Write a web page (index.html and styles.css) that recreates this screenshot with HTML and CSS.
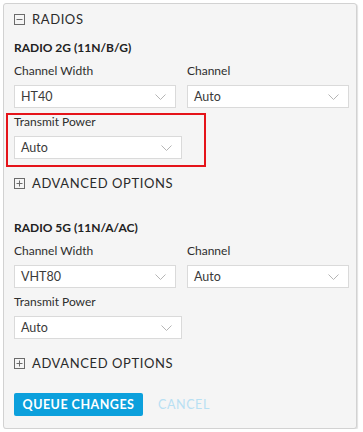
FILE: index.html
```html
<!DOCTYPE html>
<html lang="en">
<head>
<meta charset="utf-8">
<title>Radios</title>
<link rel="stylesheet" href="styles.css">
</head>
<body>
<div class="panel">
  <div class="toggle-row">
    <svg class="toggle-icon" width="11" height="11" viewBox="0 0 11 11"><rect x="0.5" y="0.5" width="10" height="10" fill="none" stroke="#6b6b6b"/><line x1="2.5" y1="5.5" x2="8.5" y2="5.5" stroke="#6b6b6b"/></svg>
    <span class="toggle-text">RADIOS</span>
  </div>

  <div class="radio-title">RADIO 2G (11N/B/G)</div>
  <div class="field-row">
    <div class="field">
      <div class="field-label">Channel Width</div>
      <div class="select"><span>HT40</span><svg class="chev" width="11" height="6" viewBox="0 0 11 6"><polyline points="0.5,0.5 5.5,5.5 10.5,0.5" fill="none" stroke="#b5b5b5"/></svg></div>
    </div>
    <div class="field">
      <div class="field-label">Channel</div>
      <div class="select"><span>Auto</span><svg class="chev" width="11" height="6" viewBox="0 0 11 6"><polyline points="0.5,0.5 5.5,5.5 10.5,0.5" fill="none" stroke="#b5b5b5"/></svg></div>
    </div>
  </div>
  <div class="field field-power highlighted">
    <div class="field-label">Transmit Power</div>
    <div class="select"><span>Auto</span><svg class="chev" width="11" height="6" viewBox="0 0 11 6"><polyline points="0.5,0.5 5.5,5.5 10.5,0.5" fill="none" stroke="#b5b5b5"/></svg></div>
  </div>
  <div class="toggle-row advanced">
    <svg class="toggle-icon" width="11" height="11" viewBox="0 0 11 11"><rect x="0.5" y="0.5" width="10" height="10" fill="none" stroke="#6b6b6b"/><line x1="2.5" y1="5.5" x2="8.5" y2="5.5" stroke="#6b6b6b"/><line x1="5.5" y1="2.5" x2="5.5" y2="8.5" stroke="#6b6b6b"/></svg>
    <span class="toggle-text">ADVANCED OPTIONS</span>
  </div>

  <div class="radio-title second">RADIO 5G (11N/A/AC)</div>
  <div class="field-row">
    <div class="field">
      <div class="field-label">Channel Width</div>
      <div class="select"><span>VHT80</span><svg class="chev" width="11" height="6" viewBox="0 0 11 6"><polyline points="0.5,0.5 5.5,5.5 10.5,0.5" fill="none" stroke="#b5b5b5"/></svg></div>
    </div>
    <div class="field">
      <div class="field-label">Channel</div>
      <div class="select"><span>Auto</span><svg class="chev" width="11" height="6" viewBox="0 0 11 6"><polyline points="0.5,0.5 5.5,5.5 10.5,0.5" fill="none" stroke="#b5b5b5"/></svg></div>
    </div>
  </div>
  <div class="field field-power">
    <div class="field-label">Transmit Power</div>
    <div class="select"><span>Auto</span><svg class="chev" width="11" height="6" viewBox="0 0 11 6"><polyline points="0.5,0.5 5.5,5.5 10.5,0.5" fill="none" stroke="#b5b5b5"/></svg></div>
  </div>
  <div class="toggle-row advanced">
    <svg class="toggle-icon" width="11" height="11" viewBox="0 0 11 11"><rect x="0.5" y="0.5" width="10" height="10" fill="none" stroke="#6b6b6b"/><line x1="2.5" y1="5.5" x2="8.5" y2="5.5" stroke="#6b6b6b"/><line x1="5.5" y1="2.5" x2="5.5" y2="8.5" stroke="#6b6b6b"/></svg>
    <span class="toggle-text">ADVANCED OPTIONS</span>
  </div>

  <div class="actions">
    <button class="btn-primary">QUEUE CHANGES</button>
    <button class="btn-link">CANCEL</button>
  </div>
</div>
</body>
</html>
```

FILE: styles.css
```css
html, body {
  margin: 0;
  padding: 0;
  background: #ffffff;
}
body {
  font-family: Lato, "Open Sans", sans-serif;
  color: #333333;
}
.panel {
  box-sizing: border-box;
  width: 354px;
  height: 426px;
  margin: 3px 0 0 3px;
  padding: 5px 10px 10px 10px;
  background: #f5f5f5;
  border: 1px solid #d2d2d2;
  border-radius: 3px;
  box-shadow: 1px 1px 1px rgba(0, 0, 0, 0.12);
}
.toggle-row {
  display: flex;
  align-items: center;
  height: 20px;
}
.toggle-icon {
  display: block;
  flex: none;
}
.toggle-text {
  margin-left: 7px;
  font-size: 13px;
  line-height: 20px;
  letter-spacing: 0.6px;
  color: #2b2b2b;
}
.radio-title {
  margin-top: 11px;
  font-size: 12px;
  font-weight: 700;
  line-height: 16px;
  color: #222222;
}
.radio-title.second {
  margin-top: 27px;
}
.field-row {
  display: grid;
  grid-template-columns: 162px 162px;
  column-gap: 11px;
  margin-top: 7px;
}
.field-label {
  font-size: 12px;
  line-height: 16px;
  color: #2e2e2e;
  margin-bottom: 6px;
}
.select {
  box-sizing: border-box;
  height: 23px;
  display: flex;
  align-items: center;
  justify-content: space-between;
  padding: 0 9px 0 6px;
  background: #ffffff;
  border: 1px solid #dadada;
  font-size: 12.5px;
  color: #3a3a3a;
}
.chev {
  display: block;
  flex: none;
}
.field-power {
  width: 168px;
  margin-top: 6px;
}
.highlighted {
  position: relative;
}
.highlighted::after {
  content: "";
  position: absolute;
  left: -8px;
  top: -1px;
  width: 200px;
  height: 54px;
  box-sizing: border-box;
  border: 2px solid #e5141a;
  pointer-events: none;
}
.advanced {
  margin-top: 14px;
}
.actions {
  display: flex;
  align-items: center;
  margin-top: 20px;
}
.btn-primary {
  height: 23px;
  width: 129px;
  padding: 0;
  border: none;
  border-radius: 2px;
  background: #0ca0dc;
  color: #ffffff;
  font-family: Lato, "Open Sans", sans-serif;
  font-size: 12.5px;
  font-weight: 700;
  letter-spacing: 0.5px;
}
.btn-link {
  margin-left: 11px;
  padding: 0 4px;
  border: none;
  background: none;
  color: #b8e0f3;
  font-family: Lato, "Open Sans", sans-serif;
  font-size: 12.5px;
  font-weight: 400;
  letter-spacing: 0.6px;
}
```
